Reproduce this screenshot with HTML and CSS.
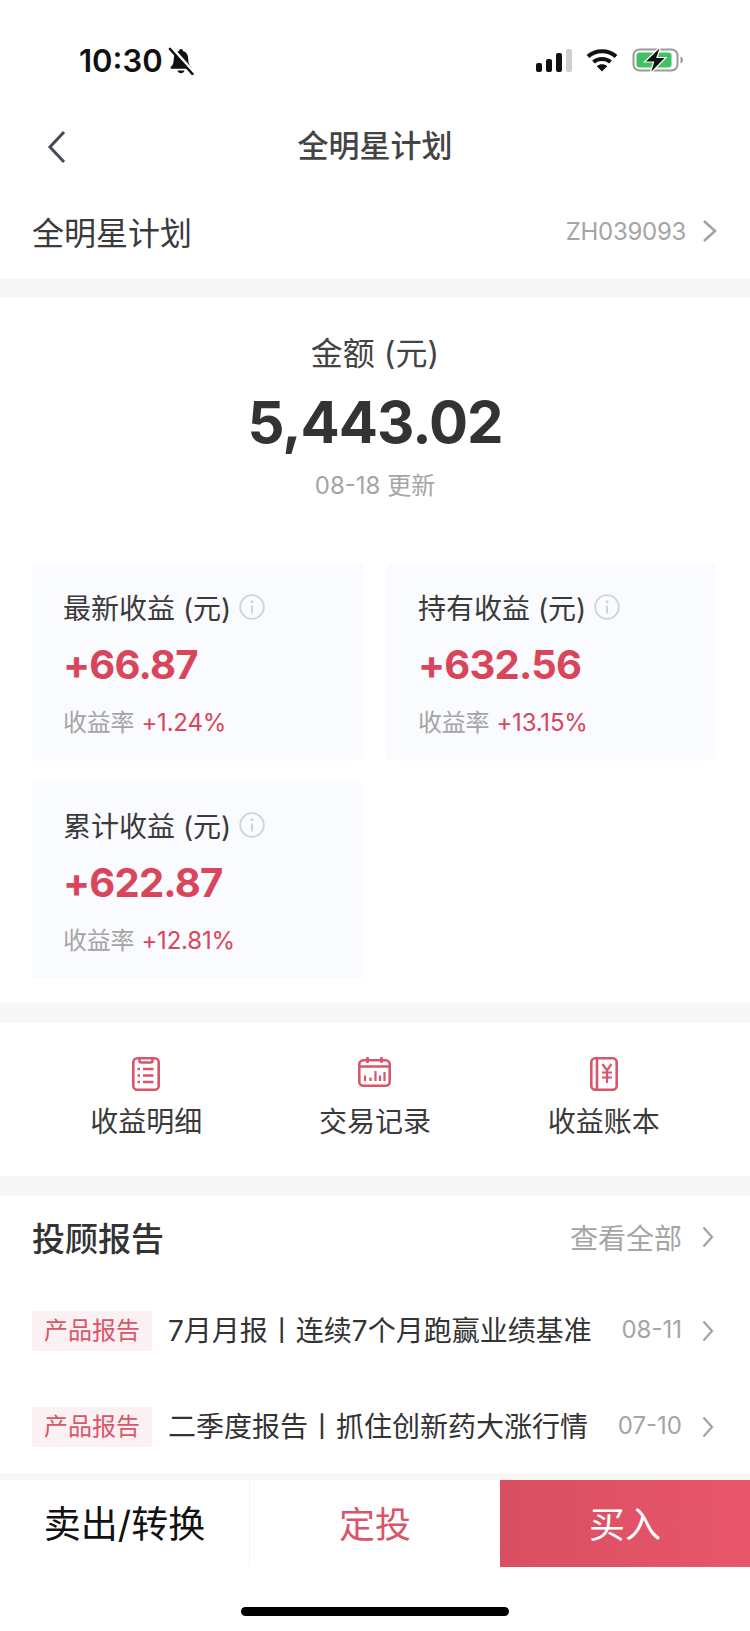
FILE: index.html
```html
<!DOCTYPE html>
<html lang="zh-CN">
<head>
    <meta charset="UTF-8">
    <meta name="viewport" content="width=device-width, initial-scale=1.0">
    <title>全明星计划</title>
    <link rel="stylesheet" href="styles.css">
</head>
<body>

<div class="page">
    <div class="status-bar">
        <div class="status-left">
            <span class="status-time">10:30</span>
            <svg class="icon-bell" viewBox="0 0 26 28" width="26" height="28">
                <path d="M13 2c-1.2 0-2 .8-2 1.9C7.600 4.800 5.800 7.700 5.800 11.500c0 4.500-1 6.500-3 8.500-.6.700-.2 1.700.8 1.700h18.800c1 0 1.400-1 .8-1.700-2-2-3-4-3-8.500 0-3.800-1.800-6.700-5.200-7.600C15 2.800 14.200 2 13 2z" fill="#111"/>
                <path d="M9.500 23.500c.4 1.700 1.800 2.700 3.500 2.700s3.100-1 3.500-2.700z" fill="#111"/>
                <path d="M3.500 .5L26 25.500" stroke="#fff" stroke-width="3"/>
                <path d="M2 2l22.500 25" stroke="#111" stroke-width="2.600" stroke-linecap="round"/>
            </svg>
        </div>
        <div class="status-right">
            <svg viewBox="0 0 36 23" width="36" height="23">
                <rect x="0" y="14" width="6" height="9" rx="2" fill="#111"/>
                <rect x="10" y="10" width="6" height="13" rx="2" fill="#111"/>
                <rect x="20" y="4" width="6" height="19" rx="2" fill="#111"/>
                <rect x="30" y="0" width="6" height="23" rx="2" fill="#cfcfcf"/>
            </svg>
            <svg viewBox="0 0 32 24" width="32" height="24">
                <path d="M2 8.500C9.500 1.500 22.500 1.500 30 8.500" fill="none" stroke="#111" stroke-width="4"/>
                <path d="M7.500 14c4.500-4 12.500-4 17 0" fill="none" stroke="#111" stroke-width="4"/>
                <path d="M10.800 18.200L16 23.500l5.200-5.300c-2.800-2.600-7.600-2.600-10.400 0z" fill="#111"/>
            </svg>
            <svg viewBox="0 0 52 28" width="52" height="28">
                <rect x="1.500" y="3.500" width="44" height="21" rx="6" fill="none" stroke="#9a9a9a" stroke-width="2"/>
                <rect x="4.500" y="6.500" width="35" height="15" rx="3" fill="#3ec262"/>
                <path d="M48.500 10.500c1.700.5 2.500 2 2.500 3.500s-.8 3-2.500 3.500z" fill="#9a9a9a"/>
                <path d="M29 0L12.500 16h9L18 28 34 11.500h-9z" fill="#111" stroke="#fff" stroke-width="1.200"/>
            </svg>
        </div>
    </div>

    <div class="nav">
        <svg class="nav-back" viewBox="0 0 20 34" width="20" height="34">
            <path d="M17 2L3 17l14 15" fill="none" stroke="#444a55" stroke-width="3"/>
        </svg>
        <div class="nav-title">全明星计划</div>
    </div>

    <div class="plan-row">
        <div class="plan-name">全明星计划</div>
        <div class="plan-code">ZH039093</div>
        <svg class="chevron" viewBox="0 0 16 24" width="16" height="24">
            <path d="M2 2l11 10L2 22" fill="none" stroke="#a3a3a3" stroke-width="2.600"/>
        </svg>
    </div>

    <div class="section amount">
        <div class="amount-label">金额 (元)</div>
        <div class="amount-value">5,443.02</div>
        <div class="amount-date">08-18 更新</div>

        <div class="cards">
            <div class="card">
                <div class="card-title">最新收益 (元)
                    <svg class="icon-info" viewBox="0 0 26 26" width="26" height="26">
                        <circle cx="13" cy="13" r="11.800" fill="none" stroke="#cfd2d7" stroke-width="1.800"/>
                        <circle cx="13" cy="7.800" r="1.500" fill="#cfd2d7"/>
                        <path d="M13 11.500v8" stroke="#cfd2d7" stroke-width="2"/>
                    </svg>
                </div>
                <div class="card-value">+66.87</div>
                <div class="card-rate">收益率<span class="rate-num">+1.24%</span></div>
            </div>
            <div class="card">
                <div class="card-title">持有收益 (元)
                    <svg class="icon-info" viewBox="0 0 26 26" width="26" height="26">
                        <circle cx="13" cy="13" r="11.800" fill="none" stroke="#cfd2d7" stroke-width="1.800"/>
                        <circle cx="13" cy="7.800" r="1.500" fill="#cfd2d7"/>
                        <path d="M13 11.500v8" stroke="#cfd2d7" stroke-width="2"/>
                    </svg>
                </div>
                <div class="card-value">+632.56</div>
                <div class="card-rate">收益率<span class="rate-num">+13.15%</span></div>
            </div>
            <div class="card">
                <div class="card-title">累计收益 (元)
                    <svg class="icon-info" viewBox="0 0 26 26" width="26" height="26">
                        <circle cx="13" cy="13" r="11.800" fill="none" stroke="#cfd2d7" stroke-width="1.800"/>
                        <circle cx="13" cy="7.800" r="1.500" fill="#cfd2d7"/>
                        <path d="M13 11.500v8" stroke="#cfd2d7" stroke-width="2"/>
                    </svg>
                </div>
                <div class="card-value">+622.87</div>
                <div class="card-rate">收益率<span class="rate-num">+12.81%</span></div>
            </div>
        </div>
    </div>

    <div class="section actions">
        <div class="action">
            <svg viewBox="0 0 28 34" width="28" height="34" fill="none" stroke="#d9556a" stroke-width="2.600">
                <rect x="1.300" y="1.300" width="25.400" height="31.400" rx="4"/>
                <path d="M7.500 1.500v2.300c0 1 .7 1.700 1.700 1.700h9.600c1 0 1.700-.7 1.700-1.700V1.500"/>
                <path d="M11 12h10.500M11 18.500h10.500M11 25h10.500"/>
                <path d="M5.500 12h2.500M5.500 18.500h2.500M5.500 25h2.500"/>
            </svg>
            <div class="action-label">收益明细</div>
        </div>
        <div class="action">
            <svg viewBox="0 0 33 30" width="33" height="30" fill="none" stroke="#d9556a" stroke-width="2.600">
                <rect x="1.300" y="3.300" width="30.400" height="25.400" rx="4"/>
                <path d="M1.500 9.500h30M9.500 0v6M23.500 0v6"/>
                <path d="M7 18.500V24M12.500 20.500V24M17.500 14V24M22 18.500V24M26.500 15V24" stroke-width="2.200"/>
            </svg>
            <div class="action-label">交易记录</div>
        </div>
        <div class="action">
            <svg viewBox="0 0 28 34" width="28" height="34" fill="none" stroke="#d9556a" stroke-width="2.600">
                <rect x="1.300" y="1.300" width="25.400" height="31.400" rx="4"/>
                <path d="M7 1.500v31"/>
                <path d="M12.500 7l4.500 6.500L21.500 7M17 13.500V26M12 15.500h10M12 20.500h10" stroke-width="2.200"/>
            </svg>
            <div class="action-label">收益账本</div>
        </div>
    </div>

    <div class="section reports">
        <div class="reports-head">
            <div class="reports-title">投顾报告</div>
            <div class="reports-all">查看全部</div>
            <svg class="chevron-small" viewBox="0 0 12 22" width="12" height="22">
                <path d="M1.500 1.500L10 11l-8.500 9.500" fill="none" stroke="#a3a3a3" stroke-width="2.200"/>
            </svg>
        </div>
        <div class="report-row">
            <span class="tag">产品报告</span>
            <span class="report-title">7月月报丨连续7个月跑赢业绩基准</span>
            <span class="report-date">08-11</span>
            <svg class="chevron-small" viewBox="0 0 12 22" width="12" height="22">
                <path d="M1.500 1.500L10 11l-8.500 9.500" fill="none" stroke="#a3a3a3" stroke-width="2.200"/>
            </svg>
        </div>
        <div class="report-row">
            <span class="tag">产品报告</span>
            <span class="report-title">二季度报告丨抓住创新药大涨行情</span>
            <span class="report-date">07-10</span>
            <svg class="chevron-small" viewBox="0 0 12 22" width="12" height="22">
                <path d="M1.500 1.500L10 11l-8.500 9.500" fill="none" stroke="#a3a3a3" stroke-width="2.200"/>
            </svg>
        </div>
    </div>

    <div class="footer">
        <div class="footer-btn btn-sell">卖出/转换</div>
        <div class="footer-btn btn-plan">定投</div>
        <div class="footer-btn btn-buy">买入</div>
    </div>

    <div class="home-bar"><div class="home-indicator"></div></div>
</div>

</body>
</html>
```
FILE: styles.css
```css
:root {
    --red: #d9455a;
    --red-soft: #d9556a;
    --band: #f7f7f7;
    --text: #333;
    --gray: #a5a5a5;
}
body {
    margin: 0;
    background: #fff;
    color: var(--text);
    font-family: 'Inter', 'Noto Sans CJK SC', sans-serif;
}
.page {
    width: 750px;
    height: 1631px;
    overflow: hidden;
}

/* status bar */
.status-bar {
    height: 118px;
    box-sizing: border-box;
    padding: 45px 66px 0 79px;
    display: flex;
    justify-content: space-between;
    align-items: flex-start;
}
.status-left { display: flex; align-items: center; gap: 5px; height: 32px; }
.status-time { font-size: 31px; font-weight: 600; color: #111; line-height: 32px; }
.status-right { display: flex; align-items: center; gap: 14px; height: 32px; margin-top: -1px; }

/* nav */
.nav {
    height: 58px;
    box-sizing: border-box;
    padding-bottom: 8px;
    display: flex;
    align-items: center;
    justify-content: center;
    position: relative;
}
.nav-back { position: absolute; left: 47px; top: 12px; }
.nav-title { font-size: 31px; font-weight: 500; color: #444; }

.plan-row {
    height: 102px;
    box-sizing: border-box;
    padding: 8px 32px 0 32px;
    display: flex;
    align-items: center;
}
.plan-name { font-size: 32px; color: #3a3a3a; flex: 1; }
.plan-code { font-size: 24px; letter-spacing: -0.3px; color: var(--gray); margin-right: 16px; }

.section { border-top: 20px solid var(--band); }

/* amount */
.amount { text-align: center; height: 725px; box-sizing: border-box; padding-top: 29px; }
.amount-label { font-size: 32px; color: #444; line-height: 53px; }
.amount-value { font-size: 58px; font-weight: 700; letter-spacing: -1px; line-height: 84px; color: #333; }
.amount-date { font-size: 24px; color: var(--gray); line-height: 44px; }
.cards {
    display: grid;
    grid-template-columns: 332px 329px;
    column-gap: 23px;
    row-gap: 23px;
    padding: 57px 0 0 32px;
    text-align: left;
}
.card {
    background: #fafbfe;
    height: 195px;
    box-sizing: border-box;
    padding: 24px 0 0 33px;
    padding-left: 31px;
}
.card-title {
    font-size: 28px;
    line-height: 40px;
    color: #3a3a3a;
    display: flex;
    align-items: center;
    gap: 8px;
}
.icon-info { margin-top: -4px; }
.card-value { font-size: 40px; font-weight: 700; letter-spacing: -0.8px; color: var(--red); line-height: 72px; }
.card-rate { font-size: 24px; letter-spacing: -0.2px; color: var(--gray); line-height: 44px; }
.rate-num { color: var(--red); margin-left: 7px; }

/* shortcuts */
.actions {
    height: 173px;
    box-sizing: border-box;
    padding: 34px 32px 0;
    display: grid;
    grid-template-columns: repeat(3, 1fr);
}
.action {
    display: flex;
    flex-direction: column;
    align-items: center;
    height: 85px;
    justify-content: space-between;
}
.action-label { font-size: 28px; color: #3a3a3a; line-height: 40px; }

/* reports */
.reports { height: 297px; box-sizing: border-box; padding: 0 36px 0 32px; }
.reports-head { height: 87px; box-sizing: border-box; padding-bottom: 6px; display: flex; align-items: center; }
.reports-title { font-size: 33px; font-weight: 500; color: #333; flex: 1; }
.reports-all { font-size: 28px; color: var(--gray); margin-right: 20px; }
.report-row { height: 96px; display: flex; align-items: center; }
.tag {
    width: 120px;
    height: 40px;
    line-height: 40px;
    text-align: center;
    background: #fbf0f2;
    color: var(--red-soft);
    font-size: 24px;
    border-radius: 3px;
    margin-right: 16px;
}
.report-title { font-size: 28px; color: #333; flex: 1; white-space: nowrap; padding-bottom: 4px; }
.report-date { font-size: 24px; color: var(--gray); margin-right: 20px; padding-bottom: 4px; }

/* bottom */
.footer {
    height: 87px;
    display: grid;
    grid-template-columns: 250px 250px 250px;
    border-top: 7px solid var(--band);
}
.footer-btn {
    display: flex;
    align-items: center;
    justify-content: center;
    font-size: 36px;
    padding-bottom: 4px;
    box-sizing: border-box;
}
.btn-sell { color: #111; border-right: 1px solid #f3f3f3; font-size: 37px; }
.btn-plan { color: var(--red-soft); }
.btn-buy { color: #fff; background: linear-gradient(90deg, #d94f62, #e8566a); }
.home-bar { display: flex; justify-content: center; padding-top: 40px; }
.home-indicator { width: 268px; height: 9px; background: #000; border-radius: 5px; }
```
